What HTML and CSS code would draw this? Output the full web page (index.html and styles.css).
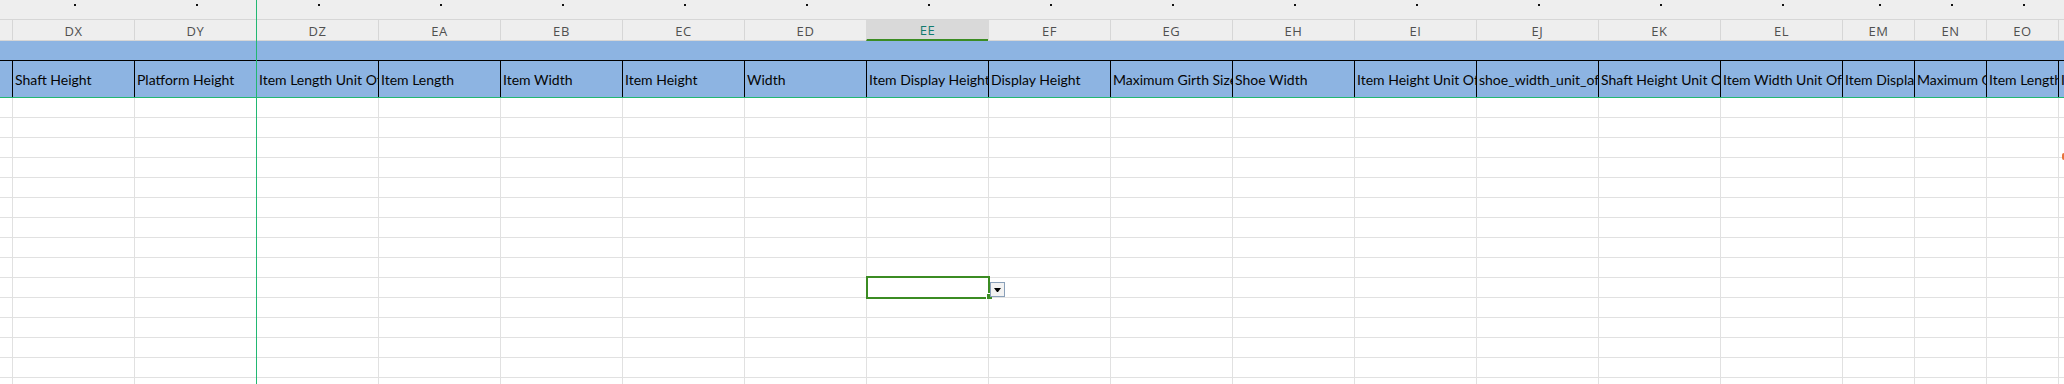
FILE: index.html
```html
<!DOCTYPE html>
<html lang="en">
<head>
<meta charset="utf-8">
<title>Sheet</title>
<link rel="stylesheet" href="styles.css">
</head>
<body>
<div class="sheet">
  <div class="outline">
    <div class="oc"></div>
    <div class="oc"><i class="dot"></i></div>
    <div class="oc"><i class="dot"></i></div>
    <div class="oc"><i class="dot"></i></div>
    <div class="oc"><i class="dot"></i></div>
    <div class="oc"><i class="dot"></i></div>
    <div class="oc"><i class="dot"></i></div>
    <div class="oc"><i class="dot"></i></div>
    <div class="oc"><i class="dot"></i></div>
    <div class="oc"><i class="dot"></i></div>
    <div class="oc"><i class="dot"></i></div>
    <div class="oc"><i class="dot"></i></div>
    <div class="oc"><i class="dot"></i></div>
    <div class="oc"><i class="dot"></i></div>
    <div class="oc"><i class="dot"></i></div>
    <div class="oc"><i class="dot"></i></div>
    <div class="oc"><i class="dot"></i></div>
    <div class="oc"><i class="dot"></i></div>
    <div class="oc"><i class="dot"></i></div>
    <div class="oc"></div>
  </div>
  <div class="colheads">
    <div class="ch edge"></div>
    <div class="ch">DX</div>
    <div class="ch">DY</div>
    <div class="ch">DZ</div>
    <div class="ch">EA</div>
    <div class="ch">EB</div>
    <div class="ch">EC</div>
    <div class="ch">ED</div>
    <div class="ch sel">EE</div>
    <div class="ch after-sel">EF</div>
    <div class="ch">EG</div>
    <div class="ch">EH</div>
    <div class="ch">EI</div>
    <div class="ch">EJ</div>
    <div class="ch">EK</div>
    <div class="ch">EL</div>
    <div class="ch">EM</div>
    <div class="ch">EN</div>
    <div class="ch">EO</div>
    <div class="ch"></div>
  </div>
  <div class="band"></div>
  <div class="hdr">
    <div class="hc edge"></div>
    <div class="hc">Shaft Height</div>
    <div class="hc">Platform Height</div>
    <div class="hc">Item Length Unit Of</div>
    <div class="hc">Item Length</div>
    <div class="hc">Item Width</div>
    <div class="hc">Item Height</div>
    <div class="hc">Width</div>
    <div class="hc">Item Display Height</div>
    <div class="hc">Display Height</div>
    <div class="hc">Maximum Girth Size</div>
    <div class="hc">Shoe Width</div>
    <div class="hc">Item Height Unit Of</div>
    <div class="hc">shoe_width_unit_of</div>
    <div class="hc">Shaft Height Unit Of</div>
    <div class="hc">Item Width Unit Of</div>
    <div class="hc">Item Display</div>
    <div class="hc">Maximum Girth</div>
    <div class="hc">Item Length</div>
    <div class="hc">Item</div>
  </div>
  <div class="grid">
    <div class="bc edge"></div>
    <div class="bc"></div>
    <div class="bc"></div>
    <div class="bc"></div>
    <div class="bc"></div>
    <div class="bc"></div>
    <div class="bc"></div>
    <div class="bc"></div>
    <div class="bc cur">
      <div class="sel-box"><span class="handle"></span></div>
      <div class="dd"><span class="arrow"></span></div>
    </div>
    <div class="bc"></div>
    <div class="bc"></div>
    <div class="bc"></div>
    <div class="bc"></div>
    <div class="bc"></div>
    <div class="bc"></div>
    <div class="bc"></div>
    <div class="bc"></div>
    <div class="bc"></div>
    <div class="bc"></div>
    <div class="bc"></div>
  </div>
  <div class="freeze"></div>
  <div class="mark"></div>
</div>
</body>
</html>
```
FILE: styles.css
```css
html, body {
  margin: 0;
  padding: 0;
  background: #ffffff;
}

.sheet {
  position: relative;
  width: 2064px;
  height: 384px;
  overflow: hidden;
  background: #ffffff;
}

.outline,
.colheads,
.hdr,
.grid {
  display: grid;
  grid-template-columns: 12px repeat(15, 122px) repeat(3, 72px) 1fr;
}

/* outline (grouping) bar */
.outline {
  height: 20px;
  box-sizing: border-box;
  background: #eeeeee;
  border-bottom: 1px solid #d6d6d6;
}

.oc {
  display: flex;
  justify-content: center;
  align-items: flex-start;
}

.dot {
  display: block;
  width: 2px;
  height: 2px;
  margin-top: 4px;
  margin-left: 4px;
  background: #111111;
}

/* column letters */
.colheads {
  height: 21px;
  box-sizing: border-box;
  background: #eeeeee;
  border-bottom: 1px solid #d6d6d6;
}

.ch {
  box-sizing: border-box;
  border-left: 1px solid #d6d6d6;
  display: flex;
  align-items: center;
  justify-content: center;
  padding-top: 1px;
  font-family: "Open Sans", "Noto Sans", sans-serif;
  font-size: 13px;
  letter-spacing: 0.6px;
  color: #505050;
  overflow: hidden;
}

.ch.edge {
  border-left: none;
}

.ch.sel {
  background: #d9d9d9;
  color: #127a6e;
  border-left-color: #d9d9d9;
  border-bottom: 2px solid #3b8c23;
  margin-bottom: -1px;
}

.ch.after-sel {
  border-left-color: #d9d9d9;
}

/* blue title band */
.band {
  height: 19px;
  background: #8db4e2;
}

/* header row */
.hdr {
  height: 38px;
  box-sizing: border-box;
  background: #8db4e2;
  border-top: 1px solid #000000;
  border-bottom: 1px solid #21b872;
}

.hc {
  box-sizing: border-box;
  border-left: 1px solid #000000;
  display: flex;
  align-items: center;
  padding-left: 2px;
  padding-top: 1px;
  font-family: Lato, "Liberation Sans", sans-serif;
  font-size: 14px;
  color: #050505;
  white-space: nowrap;
  overflow: hidden;
}

.hc.edge {
  border-left: none;
}

/* body cells */
.grid {
  height: 286px;
}

.bc {
  border-left: 1px solid #e1e1e1;
  background: repeating-linear-gradient(to bottom, transparent 0, transparent 19px, #e1e1e1 19px, #e1e1e1 20px);
}

.bc.edge {
  border-left: none;
}

.bc.cur {
  position: relative;
  z-index: 1;
}

.sel-box {
  position: absolute;
  left: -1px;
  top: 178px;
  width: 124px;
  height: 23px;
  box-sizing: border-box;
  border: 2px solid #3b8c23;
}

.handle {
  position: absolute;
  left: 118px;
  top: 15px;
  width: 5px;
  height: 5px;
  background: #3b8c23;
  border-left: 1px solid #ffffff;
  border-top: 1px solid #ffffff;
}

.dd {
  position: absolute;
  left: 123px;
  top: 184px;
  width: 15px;
  height: 15px;
  box-sizing: border-box;
  border: 1px solid #8aa0b9;
  background: #f2f2f2;
  display: flex;
  justify-content: center;
  align-items: center;
}

.arrow {
  display: block;
  width: 1px;
  height: 0;
  margin-top: 1px;
  border-top: 4px solid #000000;
  border-left: 3px solid transparent;
  border-right: 3px solid transparent;
}

/* freeze pane line */
.freeze {
  position: absolute;
  left: 256px;
  top: 0;
  width: 1px;
  height: 384px;
  background: #21b872;
}

.mark {
  position: absolute;
  right: 0;
  top: 153px;
  width: 2px;
  height: 7px;
  background: #e8743b;
  border-radius: 3px 0 0 3px;
}
```
